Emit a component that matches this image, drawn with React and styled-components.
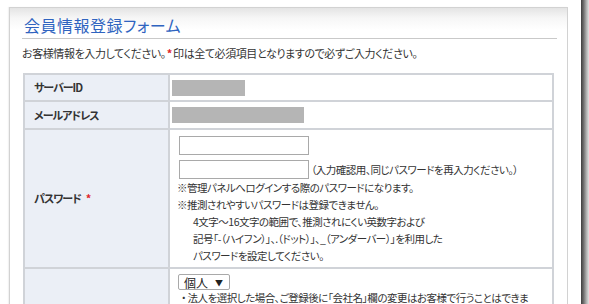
import React from "react";
import styled, { createGlobalStyle } from "styled-components";

const Global = createGlobalStyle`
  html, body { margin: 0; padding: 0; background: #fff; }
  body {
    font-family: "Noto Sans CJK JP", "Noto Sans", sans-serif;
    font-feature-settings: "palt";
    color: #333;
    overflow: hidden;
  }
`;

const Page = styled.div`
  display: flex;
  height: 304px;
  padding: 7px 0 0 9px;
  box-sizing: border-box;
  overflow: hidden;
`;

const Panel = styled.div`
  width: 559px;
  flex: none;
  box-sizing: border-box;
  border: 1px solid #d2d2d2;
  border-bottom: none;
  background: linear-gradient(to bottom, #e4e4e4 0px, #f6f6f6 10px, #fff 22px);
  box-shadow: -1px 0 1px rgba(0, 0, 0, 0.05);
`;

const FrameEdge = styled.div`
  width: 8px;
  flex: none;
  margin-left: 13px;
  margin-top: -7px;
  height: 304px;
  background: linear-gradient(to right, #3e3e3e 0%, #6a6a6a 30%, #b4b4b4 70%, #e2e2e2 100%);
`;

const TitleBar = styled.div`
  margin: 0 10px 0 12px;
  padding: 7px 0 3px 2px;
  border-bottom: 1px solid #c9c9c9;
`;

const Title = styled.h1`
  margin: 0;
  font-size: 16px;
  line-height: 20px;
  font-weight: normal;
  color: #2f64c0;
  letter-spacing: 0.5px;
`;

const Intro = styled.p`
  margin: 6px 0 0 12px;
  font-size: 11px;
  line-height: 17px;
  letter-spacing: -0.4px;
  color: #333;
`;

const Req = styled.span`
  color: #e0262a;
  font-weight: bold;
  margin: 0 1px 0 ${(p) => p.$gap || 1}px;
`;

const Table = styled.table`
  margin: 11px 0 0 13px;
  width: 531px;
  border-collapse: collapse;
  table-layout: fixed;
  font-size: 10.5px;
  line-height: 17px;
  letter-spacing: -0.5px;
`;

const Label = styled.th`
  width: 145px;
  box-sizing: border-box;
  background: #ebeff6;
  border: 2px solid #d0d3d8;
  text-align: left;
  padding: 4px 9px;
  font-size: 11px;
  letter-spacing: -1px;
  font-weight: bold;
  color: #333;
  height: ${(p) => p.$h || 28}px;
  vertical-align: middle;
`;

const Cell = styled.td`
  border: 2px solid #d0d3d8;
  padding: ${(p) => p.$pad || "6px 8px 3px 7px"};
  vertical-align: ${(p) => (p.$top ? "top" : "middle")};
  color: #333;
`;

const Mask = styled.div`
  width: ${(p) => p.$w}px;
  height: 16px;
  background: #b5b5b5;
`;

const InputRow = styled.div`
  display: flex;
  align-items: center;
  gap: 2px;
  margin: 0 0 ${(p) => p.$mb || 0}px 2px;
`;

const Input = styled.input`
  width: 130px;
  height: 19px;
  box-sizing: border-box;
  border: 1px solid #a9a9a9;
  padding: 0 3px;
  margin: 0;
  background: #fff;
  font-size: 11px;
`;

const Note = styled.div`
  padding-left: ${(p) => (p.$indent ? 16 : 0)}px;
  white-space: nowrap;
`;

const SelectBox = styled.div`
  display: inline-flex;
  align-items: center;
  gap: 7px;
  height: 16px;
  box-sizing: border-box;
  margin-left: 1px;
  padding: 0 6px 0 5px;
  border: 1px solid #a9a9a9;
  border-radius: 2px;
  background: #fff;
  font-size: 12px;
  letter-spacing: 0;
  color: #222;
`;

const Caret = styled.span`
  font-size: 8px;
  color: #222;
`;

const Bullet = styled.div`
  margin: 0 0 0 4px;
  white-space: nowrap;
  line-height: 12px;
`;

export default function App() {
  return (
    <>
      <Global />
      <Page>
        <Panel>
          <TitleBar>
            <Title>会員情報登録フォーム</Title>
          </TitleBar>
          <Intro>
            お客様情報を入力してください。<Req>*</Req>印は全て必須項目となりますので必ずご入力ください。
          </Intro>
          <Table>
            <tbody>
              <tr>
                <Label $h={27}>サーバーID</Label>
                <Cell $pad="4px 2px">
                  <Mask $w={73} />
                </Cell>
              </tr>
              <tr>
                <Label $h={28}>メールアドレス</Label>
                <Cell $pad="4px 2px">
                  <Mask $w={132} />
                </Cell>
              </tr>
              <tr>
                <Label $h={139}>
                  パスワード<Req $gap={5}>*</Req>
                </Label>
                <Cell $top>
                  <InputRow $mb={5}>
                    <Input type="password" />
                  </InputRow>
                  <InputRow>
                    <Input type="password" />
                    <span>（入力確認用、同じパスワードを再入力ください。）</span>
                  </InputRow>
                  <Note>※管理パネルへログインする際のパスワードになります。</Note>
                  <Note>※推測されやすいパスワードは登録できません。</Note>
                  <Note $indent>4文字〜16文字の範囲で、推測されにくい英数字および</Note>
                  <Note $indent>記号「-（ハイフン）」、.（ドット）」、_（アンダーバー）」を利用した</Note>
                  <Note $indent>パスワードを設定してください。</Note>
                </Cell>
              </tr>
              <tr>
                <Label $h={60}></Label>
                <Cell $top $pad="5px 8px 3px 7px">
                  <SelectBox>
                    個人 <Caret>▼</Caret>
                  </SelectBox>
                  <Bullet>・ 法人を選択した場合、ご登録後に「会社名」欄の変更はお客様で行うことはできま</Bullet>
                </Cell>
              </tr>
            </tbody>
          </Table>
        </Panel>
        <FrameEdge />
      </Page>
    </>
  );
}
